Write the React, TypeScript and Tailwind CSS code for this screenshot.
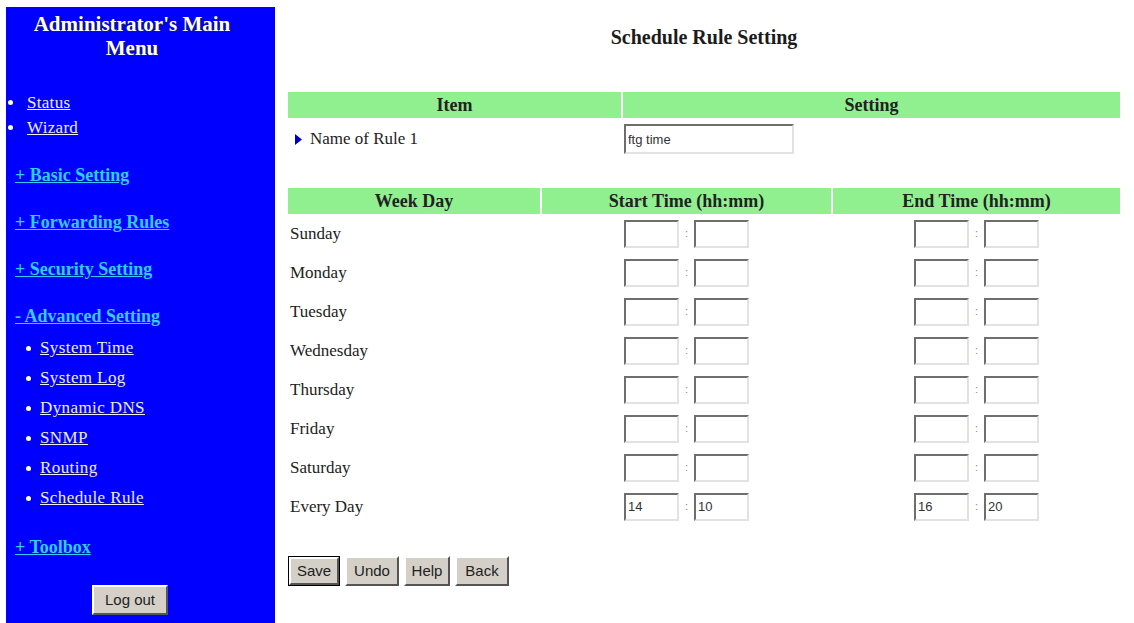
import React from "react";

const serif = { fontFamily: '"Liberation Serif", "Times New Roman", serif' };

const mainLinks = ["Status", "Wizard"];
const advancedLinks = ["System Time", "System Log", "Dynamic DNS", "SNMP", "Routing", "Schedule Rule"];
const days = ["Sunday", "Monday", "Tuesday", "Wednesday", "Thursday", "Friday", "Saturday", "Every Day"];

const everyDay = { start: ["14", "10"], end: ["16", "20"] };

function TimeInput({ value }: { value?: string }) {
  return (
    <input
      defaultValue={value ?? ""}
      className="h-[28px] w-[55px] border-2 border-t-[#6e6e6e] border-l-[#6e6e6e] border-r-[#e2e2e2] border-b-[#e2e2e2] bg-white px-[2px] text-[13px] text-[#333] outline-none font-['Liberation_Sans',Arial,sans-serif]"
    />
  );
}

function TimePair({ values }: { values?: string[] }) {
  return (
    <div className="flex items-center justify-center">
      <TimeInput value={values?.[0]} />
      <span className="w-[15px] text-center text-[11px] text-[#888] font-['Liberation_Sans',Arial,sans-serif]">:</span>
      <TimeInput value={values?.[1]} />
    </div>
  );
}

function WinButton({ label, primary, className = "" }: { label: string; primary?: boolean; className?: string }) {
  return (
    <button className={`h-[30px] ${primary ? "border border-black" : ""} ${className}`}>
      <span className="flex h-full w-full items-center justify-center border-2 border-t-white border-l-white border-r-[#555] border-b-[#555] bg-[#d4d0c8] text-[15px] text-[#222] font-['Liberation_Sans',Arial,sans-serif]">
        {label}
      </span>
    </button>
  );
}

function Sidebar() {
  return (
    <aside className="mt-[7px] ml-[6px] w-[269px] shrink-0 bg-[#0000ff]" style={serif}>
      <div className="w-[252px]">
        <h1 className="pt-[5px] text-center text-[21px] leading-[24px] font-bold text-white [text-shadow:1px_1px_1px_#202040]">
          Administrator's Main
          <br />
          Menu
        </h1>
        <ul className="mt-[30px]">
          {mainLinks.map((l) => (
            <li key={l} className="flex h-[25px] items-center">
              <span className="ml-[2px] mr-[14px] h-[5px] w-[5px] rounded-full bg-white" />
              <a className="text-[17px] tracking-[0.3px] text-[#eee] underline">{l}</a>
            </li>
          ))}
        </ul>
        <div className="pl-[9px] text-[18px] leading-[24px] font-bold text-[#33ccff]">
          <a className="mt-[23px] block underline">+ Basic Setting</a>
          <a className="mt-[23px] block underline">+ Forwarding Rules</a>
          <a className="mt-[23px] block underline">+ Security Setting</a>
          <a className="mt-[23px] block underline">- Advanced Setting</a>
        </div>
        <ul className="mt-[5px]">
          {advancedLinks.map((l) => (
            <li key={l} className="flex h-[30px] items-center">
              <span className="ml-[20px] mr-[9px] h-[5px] w-[5px] rounded-full bg-white" />
              <a className="text-[17px] tracking-[0.4px] text-[#eee] underline">{l}</a>
            </li>
          ))}
        </ul>
        <a className="mt-[22px] block pl-[9px] text-[18px] leading-[24px] font-bold text-[#33ccff] underline">+ Toolbox</a>
        <div className="mt-[26px] flex justify-center pr-[4px]">
          <WinButton label="Log out" className="w-[76px]" />
        </div>
      </div>
    </aside>
  );
}

export default function App() {
  return (
    <div className="flex min-h-[623px] w-full bg-white" style={serif}>
      <Sidebar />
      <main className="flex-1 pl-[13px] pr-[14px]">
        <h2 className="mt-[25px] text-center text-[20px] leading-[24px] font-bold text-[#1c1c1c]">
          Schedule Rule Setting
        </h2>

        <div className="mt-[43px] grid grid-cols-[333px_1fr] gap-[2px]">
          <div className="flex h-[26px] items-center justify-center bg-[#90f090] text-[18px] font-bold text-[#222]">Item</div>
          <div className="flex h-[26px] items-center justify-center bg-[#90f090] text-[18px] font-bold text-[#222]">Setting</div>
          <div className="flex h-[38px] items-center pl-[7px] text-[17px] text-[#222]">
            <svg width="7" height="11" viewBox="0 0 7 11" className="mr-[8px]">
              <path d="M0 0 L7 5.5 L0 11 Z" fill="#0000c0" />
            </svg>
            Name of Rule 1
          </div>
          <div className="flex h-[38px] items-center pl-[1px]">
            <input
              defaultValue="ftg time"
              className="h-[30px] w-[170px] border-2 border-t-[#6e6e6e] border-l-[#6e6e6e] border-r-[#e2e2e2] border-b-[#e2e2e2] bg-white px-[2px] text-[13px] text-[#333] outline-none font-['Liberation_Sans',Arial,sans-serif]"
            />
          </div>
        </div>

        <div className="mt-[30px] grid grid-cols-[252px_289px_1fr] gap-x-[2px]">
          <div className="flex h-[26px] items-center justify-center bg-[#90f090] text-[18px] font-bold text-[#222]">Week Day</div>
          <div className="flex h-[26px] items-center justify-center bg-[#90f090] text-[18px] font-bold text-[#222]">Start Time (hh:mm)</div>
          <div className="flex h-[26px] items-center justify-center bg-[#90f090] text-[18px] font-bold text-[#222]">End Time (hh:mm)</div>
          {days.map((d) => {
            const isEvery = d === "Every Day";
            return (
              <React.Fragment key={d}>
                <div className="flex h-[39px] items-center pl-[2px] text-[17px] text-[#222]">{d}</div>
                <div className="flex h-[39px] items-center justify-center">
                  <TimePair values={isEvery ? everyDay.start : undefined} />
                </div>
                <div className="flex h-[39px] items-center justify-center">
                  <TimePair values={isEvery ? everyDay.end : undefined} />
                </div>
              </React.Fragment>
            );
          })}
        </div>

        <div className="mt-[30px] flex gap-[5px]">
          <WinButton label="Save" primary className="w-[52px]" />
          <WinButton label="Undo" className="w-[54px]" />
          <WinButton label="Help" className="w-[46px]" />
          <WinButton label="Back" className="w-[54px]" />
        </div>
      </main>
    </div>
  );
}
